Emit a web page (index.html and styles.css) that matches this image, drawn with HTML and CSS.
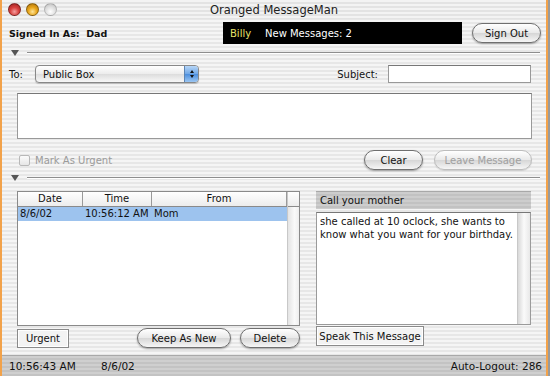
FILE: index.html
```html
<!DOCTYPE html>
<html lang="en">
<head>
<meta charset="utf-8">
<title>Oranged MessageMan</title>
<link rel="stylesheet" href="styles.css">
</head>
<body>
<div class="window">
  <div class="titlebar">
    <div class="lights">
      <span class="light close"></span>
      <span class="light mini"></span>
      <span class="light zoom"></span>
    </div>
    <div class="title">Oranged MessageMan</div>
  </div>

  <div class="content">
    <div class="toprow">
      <div class="signed">Signed In As:&nbsp; Dad</div>
      <div class="ticker"><span class="who">Billy</span><span class="count">New Messages: 2</span></div>
      <button class="pill signout">Sign Out</button>
    </div>

    <div class="divider"><span class="tri"></span><span class="groove"></span></div>

    <div class="compose">
      <div class="torow">
        <label class="lbl">To:</label>
        <div class="popup"><span>Public Box</span><span class="cap"><i class="up"></i><i class="down"></i></span></div>
        <label class="lbl subject-lbl">Subject:</label>
        <div class="field"></div>
      </div>
      <div class="body-field"></div>
      <div class="actions">
        <label class="check"><span class="box"></span>Mark As Urgent</label>
        <button class="pill clear">Clear</button>
        <button class="pill leave" disabled>Leave Message</button>
      </div>
    </div>

    <div class="divider lower"><span class="tri"></span><span class="groove"></span></div>

    <div class="messages">
      <div class="listcol">
        <div class="list">
          <div class="listmain">
            <div class="thead">
              <div class="c date">Date</div>
              <div class="c time">Time</div>
              <div class="c from">From</div>
            </div>
            <div class="row selected">
              <div class="c date">8/6/02</div>
              <div class="c time">10:56:12 AM</div>
              <div class="c from">Mom</div>
            </div>
          </div>
          <div class="track"><div class="corner"></div></div>
        </div>
        <div class="listbtns">
          <button class="square urgent">Urgent</button>
          <span class="spacer"></span>
          <button class="pill keep">Keep As New</button>
          <button class="pill delete">Delete</button>
        </div>
      </div>

      <div class="viewcol">
        <div class="subjecthead">Call your mother</div>
        <div class="viewer">
          <div class="msgtext">she called at 10 oclock, she wants to know what you want for your birthday.</div>
          <div class="vtrack"></div>
        </div>
        <div class="viewbtns">
          <button class="square speak">Speak This Message</button>
        </div>
      </div>
    </div>
  </div>

  <div class="statusbar">
    <span class="clock">10:56:43 AM</span>
    <span class="today">8/6/02</span>
    <span class="logout">Auto-Logout: 286</span>
  </div>
</div>
</body>
</html>
```

FILE: styles.css
```css
* {
  margin: 0;
  padding: 0;
  box-sizing: border-box;
}

body {
  width: 550px;
  height: 376px;
  overflow: hidden;
  background: #9a9a9a;
  font-family: "DejaVu Sans", "Liberation Sans", sans-serif;
  font-size: 10px;
  color: #111;
}

.window {
  width: 548px;
  height: 376px;
  display: flex;
  flex-direction: column;
  border-left: 2px solid #f2a24a;
  border-right: 2px solid #f2a24a;
  background: repeating-linear-gradient(#f5f5f5 0, #f5f5f5 2px, #e7e7e7 2px, #e7e7e7 4px);
}

/* title bar */
.titlebar {
  height: 19px;
  display: flex;
  align-items: center;
  position: relative;
  background: repeating-linear-gradient(#f3f3f3 0, #f3f3f3 2px, #e3e3e3 2px, #e3e3e3 4px);
}

.lights {
  display: flex;
  gap: 5px;
  padding-left: 6px;
}

.light {
  width: 13px;
  height: 13px;
  border-radius: 50%;
  display: block;
  border: 1px solid rgba(0,0,0,.35);
}

.light.close { background: radial-gradient(circle at 50% 70%, #f4a0a0 0, #d8413f 45%, #9c1f1d 100%); }
.light.mini { background: radial-gradient(circle at 50% 70%, #fde49a 0, #e9a61b 45%, #a86c07 100%); }
.light.zoom { background: radial-gradient(circle at 50% 70%, #ffffff 0, #dcdcdc 55%, #b9b9b9 100%); border-color: rgba(0,0,0,.18); }

.title {
  position: absolute;
  left: 0;
  right: 0;
  text-align: center;
  font-size: 11.5px;
  color: #222;
  pointer-events: none;
}

/* main area */
.content {
  flex: 1;
  padding: 3px 5px 0 7px;
  display: flex;
  flex-direction: column;
}

.toprow {
  height: 22px;
  display: flex;
  align-items: center;
}

.signed {
  flex: 1;
  font-weight: bold;
  font-size: 9.5px;
}

.ticker {
  width: 239px;
  height: 22px;
  background: #000;
  color: #fff;
  display: flex;
  align-items: center;
  padding-left: 7px;
  font-size: 10px;
}

.ticker .who {
  color: #e6e36a;
  width: 35px;
}

.pill {
  height: 20px;
  border: 1px solid #6f6f6f;
  border-radius: 10px;
  background: linear-gradient(#ffffff, #e9e9e9 50%, #d6d6d6 51%, #f6f6f6);
  box-shadow: 0 1px 2px rgba(0,0,0,.35);
  font-family: inherit;
  font-size: 10px;
  color: #111;
}

.signout {
  width: 69px;
  margin-left: 10px;
}

.divider {
  height: 10px;
  margin-top: 4px;
  display: flex;
  align-items: center;
  padding-left: 2px;
}

.tri {
  width: 0;
  height: 0;
  border-left: 4px solid transparent;
  border-right: 4px solid transparent;
  border-top: 6px solid #555;
}

.groove {
  flex: 1;
  height: 2px;
  margin-left: 8px;
  margin-right: 1px;
  border-top: 1px solid #8e8e8e;
  border-bottom: 1px solid #fff;
}

/* compose */
.compose {
  display: flex;
  flex-direction: column;
}

.torow {
  height: 18px;
  margin-top: 7px;
  display: flex;
  align-items: center;
}

.lbl {
  font-size: 10px;
  width: 26px;
}

.popup {
  width: 164px;
  height: 18px;
  border: 1px solid #888;
  border-radius: 4px;
  background: linear-gradient(#ffffff, #ececec 50%, #dcdcdc 51%, #f8f8f8);
  display: flex;
  align-items: center;
  justify-content: space-between;
  padding-left: 7px;
  overflow: hidden;
  box-shadow: 0 1px 1px rgba(0,0,0,.2);
}

.cap {
  width: 14px;
  height: 100%;
  background: linear-gradient(#b7d6f7, #6ea6e6 50%, #4a8ddd 51%, #9cc7f3);
  border-left: 1px solid #5b84b3;
  display: flex;
  flex-direction: column;
  align-items: center;
  justify-content: center;
  gap: 2px;
}

.cap i {
  width: 0;
  height: 0;
  border-left: 2px solid transparent;
  border-right: 2px solid transparent;
}

.cap .up { border-bottom: 3px solid #111; }
.cap .down { border-top: 3px solid #111; }

.subject-lbl {
  width: auto;
  margin-left: auto;
  margin-right: 10px;
}

.field {
  width: 143px;
  height: 18px;
  background: #fff;
  border: 1px solid #999;
  border-top-color: #777;
  margin-right: 10px;
}

.body-field {
  height: 46px;
  margin: 10px 9px 0 8px;
  background: #fff;
  border: 1px solid #999;
  border-top-color: #777;
}

.actions {
  height: 20px;
  margin-top: 11px;
  display: flex;
  align-items: center;
}

.check {
  display: flex;
  align-items: center;
  color: #9b9b9b;
  margin-left: 10px;
  font-size: 10px;
}

.check .box {
  width: 11px;
  height: 11px;
  border: 1px solid #b8b8b8;
  border-radius: 2px;
  background: linear-gradient(#fbfbfb, #e6e6e6);
  margin-right: 5px;
}

.clear {
  width: 59px;
  margin-left: auto;
}

.leave {
  width: 98px;
  margin-left: 11px;
  margin-right: 9px;
  color: #a0a0a0;
  border-color: #bdbdbd;
  box-shadow: 0 1px 1px rgba(0,0,0,.12);
}

.divider.lower {
  margin-top: 3px;
}

/* messages */
.messages {
  margin-top: 8px;
  display: flex;
  gap: 16px;
  padding-left: 8px;
}

.listcol {
  width: 283px;
  display: flex;
  flex-direction: column;
}

.list {
  height: 135px;
  display: flex;
  background: #fff;
  border: 1px solid #8a8a8a;
}

.listmain {
  flex: 1;
}

.thead {
  height: 15px;
  display: flex;
  background: linear-gradient(#ffffff, #ececec);
  border-bottom: 1px solid #8a8a8a;
}

.thead .c {
  text-align: center;
  border-right: 1px solid #9a9a9a;
  line-height: 14px;
}

.row {
  height: 14px;
  display: flex;
  line-height: 14px;
}

.row .c {
  padding-left: 2px;
  white-space: nowrap;
}

.row.selected {
  background: #9dc3ee;
}

.c.date { width: 65px; }
.c.time { width: 69px; }
.c.from { flex: 1; }

.track {
  width: 12px;
  background: linear-gradient(90deg, #e4e4e4, #fafafa 60%, #eeeeee);
  border-left: 1px solid #c8c8c8;
}

.corner {
  height: 15px;
  background: linear-gradient(#ffffff, #ececec);
  border-bottom: 1px solid #8a8a8a;
}

.listbtns {
  margin-top: 2px;
  height: 20px;
  display: flex;
  align-items: center;
}

.square {
  height: 19px;
  border: 1px solid #8a8a8a;
  background: #f3f3f3;
  font-family: inherit;
  font-size: 10px;
  color: #111;
  box-shadow: inset 0 0 0 1px #fff;
}

.urgent {
  width: 52px;
}

.spacer {
  flex: 1;
}

.keep {
  width: 94px;
}

.delete {
  width: 60px;
  margin-left: 9px;
}

.viewcol {
  width: 215px;
  display: flex;
  flex-direction: column;
}

.subjecthead {
  height: 18px;
  background: repeating-linear-gradient(#cdcdcd 0, #cdcdcd 2px, #c2c2c2 2px, #c2c2c2 4px);
  border-top: 1px solid #a8a8a8;
  padding-left: 4px;
  line-height: 17px;
  font-size: 10px;
}

.viewer {
  height: 113px;
  margin-top: 3px;
  display: flex;
  border: 1px solid #9a9a9a;
  border-top-color: #777;
}

.msgtext {
  flex: 1;
  background: #fff;
  padding: 2px 3px;
  line-height: 13px;
  font-size: 10px;
}

.vtrack {
  width: 13px;
  background: linear-gradient(90deg, #d8d8d8, #fafafa 50%, #e8e8e8);
  border-left: 1px solid #c8c8c8;
}

.viewbtns {
  margin-top: 1px;
  display: flex;
}

.speak {
  width: 108px;
  height: 20px;
}

/* status bar */
.statusbar {
  height: 21px;
  display: flex;
  align-items: center;
  padding: 0 4px 0 7px;
  border-top: 1px solid #a9a9a9;
  background: repeating-linear-gradient(#cfcfcf 0, #cfcfcf 2px, #c3c3c3 2px, #c3c3c3 4px);
  font-size: 10.5px;
}

.clock {
  width: 92px;
}

.logout {
  margin-left: auto;
}
```
